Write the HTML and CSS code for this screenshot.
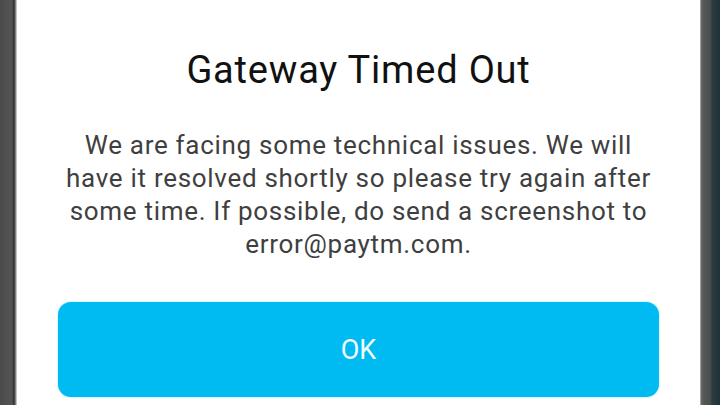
FILE: index.html
```html
<!DOCTYPE html>
<html lang="en">
  <head>
    <meta charset="UTF-8" />
    <meta name="viewport" content="width=device-width, initial-scale=1.0" />
    <title>Gateway Timed Out</title>
    <link rel="stylesheet" href="styles.css">
  </head>
  <body>
    <div class="frame">
      <div class="edge edge-left"></div>
      <div class="dialog">
        <h1 class="title">Gateway Timed Out</h1>
        <p class="message">
          We are facing some technical issues. We will<br />
          have it resolved shortly so please try again after<br />
          some time. If possible, do send a screenshot to<br />
          error@paytm.com.
        </p>
        <button class="ok-btn" type="button">OK</button>
      </div>
      <div class="edge edge-right"></div>
    </div>
  </body>
</html>
```

FILE: styles.css
```css
html,
body {
  margin: 0;
  height: 100%;
}
body {
  font-family: Roboto, "Noto Sans", sans-serif;
  background: #fff;
}
.frame {
  display: flex;
  height: 405px;
}
.edge {
  flex: none;
}
.edge-left {
  width: 17px;
  background: linear-gradient(to right, #4a4a4a 0, #555 12px, #2b2b2b 14px, #9a9a9a 16px, #e8e8e8 17px);
}
.edge-right {
  width: 20px;
  background: linear-gradient(to right, #d8d8d8 0, #6a6a6a 1px, #555 4px, #4a4f50 10px, #2c3c40 12px, #1f3236 20px);
}
.dialog {
  flex: 1;
  display: flex;
  flex-direction: column;
  align-items: center;
  background: #fff;
}
.title {
  margin: 46px 0 0;
  font-size: 38px;
  font-weight: 400;
  letter-spacing: 0.8px;
  color: #111;
  line-height: 48px;
}
.message {
  margin: 35px 0 0;
  font-size: 26px;
  line-height: 33px;
  letter-spacing: 0.7px;
  color: #3f3f3f;
  text-align: center;
}
.ok-btn {
  margin-top: 41px;
  width: 601px;
  height: 95px;
  border: none;
  border-radius: 13px;
  background: #00baf2;
  color: #f4fbff;
  font-family: Roboto, "Noto Sans", sans-serif;
  font-size: 27px;
  box-shadow: 0 0 2px #7fdcff;
}
```
